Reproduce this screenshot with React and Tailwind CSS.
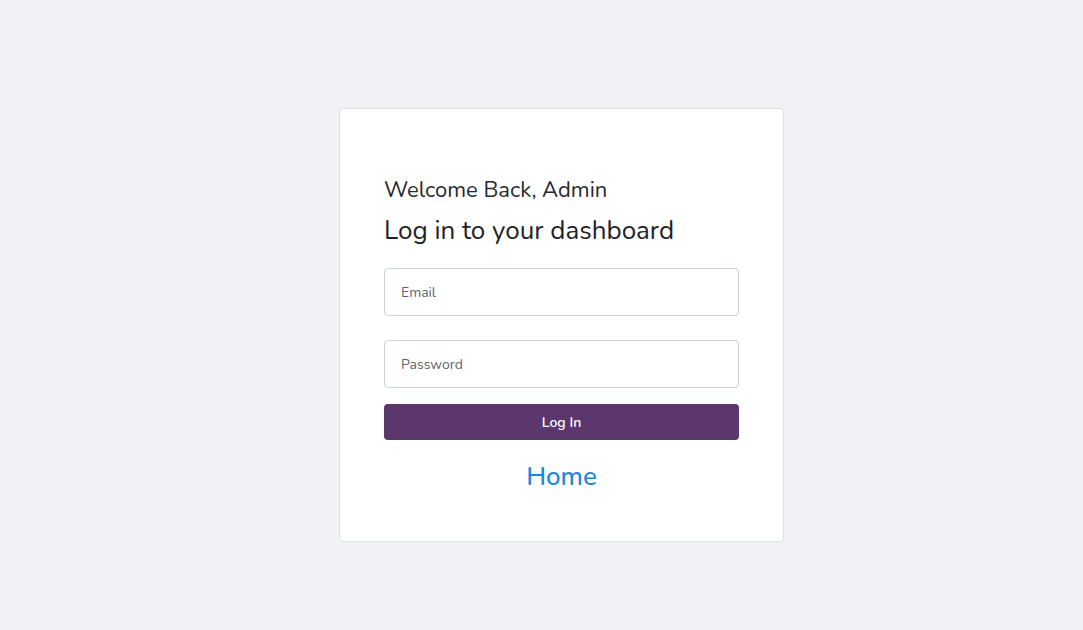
import { useState } from "react";

const font = { fontFamily: '"Nunito", "Noto Sans", "Open Sans", sans-serif' };

const LoginCard = () => {
  const [form, setForm] = useState({ email: "", password: "" });

  // update field
  const handleChange = (e) => {
    const { name, value } = e.target;
    setForm((prev) => ({ ...prev, [name]: value }));
  };

  return (
    <div className="w-[445px] bg-white border border-[#dcdfe3] rounded-[4px] px-[44px] pt-[68px] pb-[49px]">
      <p className="text-[22px] leading-[26px] text-[#262a30]">Welcome Back, Admin</p>
      <h2 className="mt-[12px] text-[26px] leading-[31px] text-[#1f2329]">Log in to your dashboard</h2>

      <form onSubmit={(e) => e.preventDefault()} className="mt-[22px] flex flex-col">
        <input
          type="email"
          name="email"
          value={form.email}
          onChange={handleChange}
          placeholder="Email"
          className="h-[48px] w-full rounded-[4px] border border-[#cdd3da] px-[16px] text-[14px] text-[#3c4248] placeholder:text-[#5d646c] outline-none"
        />
        <input
          type="password"
          name="password"
          value={form.password}
          onChange={handleChange}
          placeholder="Password"
          className="mt-[24px] h-[48px] w-full rounded-[4px] border border-[#cdd3da] px-[16px] text-[14px] text-[#3c4248] placeholder:text-[#5d646c] outline-none"
        />
        <button
          type="submit"
          className="mt-[16px] h-[36px] w-full rounded-[4px] bg-[#5c376d] text-[14px] font-semibold text-white"
        >
          Log In
        </button>
      </form>

      <div className="mt-[21px] text-center">
        <a href="#" className="text-[26px] leading-[31px] font-medium text-[#1c86d8]">
          Home
        </a>
      </div>
    </div>
  );
};

export default function App() {
  return (
    <div style={font} className="min-h-[630px] w-full bg-[#f1f2f6] flex items-start justify-center pl-[40px] pt-[108px]">
      <LoginCard />
    </div>
  );
}
